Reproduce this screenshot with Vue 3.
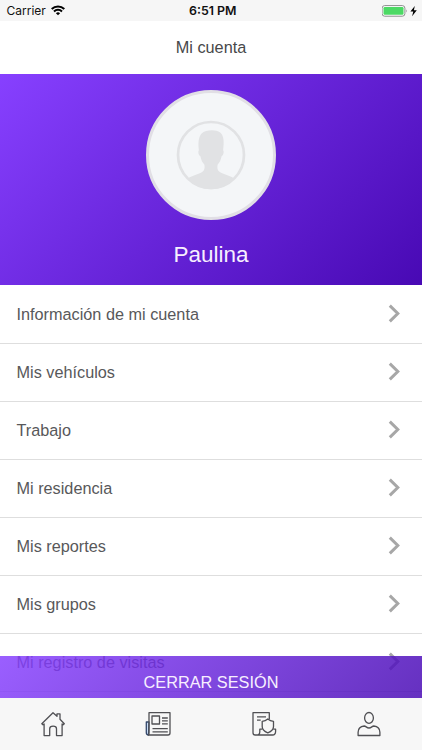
<script setup>
const items = [
  'Información de mi cuenta',
  'Mis vehículos',
  'Trabajo',
  'Mi residencia',
  'Mis reportes',
  'Mis grupos',
  'Mi registro de visitas',
]
</script>

<template>
  <div class="screen">
    <div class="status">
      <div class="carrier">
        <span>Carrier</span>
        <svg width="14" height="11" viewBox="0 0 14 11" fill="none" stroke="#000" stroke-width="2">
          <path d="M0.7 4 C4.2 0.5 9.8 0.5 13.3 4" />
          <path d="M3 6.5 C5.2 4.3 8.8 4.3 11 6.5" />
          <path d="M4.9 8.2 Q7 6.4 9.1 8.2 L7 10.3 Z" fill="#000" stroke="none" />
        </svg>
      </div>
      <div class="clock">6:51 PM</div>
      <div class="power">
        <svg width="36" height="12" viewBox="0 0 36 12">
          <rect x="0.1" y="0.6" width="22.8" height="10.6" rx="2.6" fill="#fff" stroke="#8c8c8c" />
          <rect x="1.5" y="2" width="20" height="7.8" rx="1.2" fill="#4cd964" />
          <path d="M24.2 4.2 Q25.7 5.9 24.2 7.6 Z" fill="#8c8c8c" />
          <path d="M32.8 0.9 L28.4 6.6 H31.3 L30.1 11.2 L34.8 5.2 H31.9 Z" fill="#000" />
        </svg>
      </div>
    </div>

    <header class="title">Mi cuenta</header>

    <section class="profile">
      <div class="avatar">
        <svg width="70" height="70" viewBox="0 0 70 70">
          <circle cx="35" cy="35" r="33" fill="none" stroke="#e1e2e4" stroke-width="2.7" />
          <path
            fill="#e1e2e4"
            d="M12.2 58.3 C16 55.6 22.5 54.6 26.5 51.8 C29 50 28.8 46.5 28.3 44.5 C26.2 42.3 25.2 39.7 24.4 36.2 C22.4 35.5 21.8 31 22.9 30.3 C22 23 22.3 17.5 25.6 13.5 C29.5 9.8 39.5 9.2 44.2 12.4 C48.4 15.5 48 23.5 47.1 30.3 C48.2 31 47.6 35.5 45.6 36.2 C44.8 39.7 43.8 42.3 41.7 44.5 C41.2 46.5 41 50 43.5 51.8 C47.5 54.6 54 55.6 57.8 58.3 C51.5 66.2 43.5 69.2 35 69.2 C26.5 69.2 18.5 66.2 12.2 58.3 Z"
          />
        </svg>
      </div>
      <div class="name">Paulina</div>
    </section>

    <ul class="menu">
      <li v-for="item in items" :key="item">
        <span>{{ item }}</span>
        <svg width="13" height="20" viewBox="0 0 13 20" fill="none" stroke="#a7a7a7" stroke-width="3">
          <path d="M1.8 1.6 L9.8 9.5 L1.8 17.4" />
        </svg>
      </li>
    </ul>

    <footer class="bottom">
      <button class="logout">CERRAR SESIÓN</button>
      <nav class="tabs">
        <a>
          <svg width="26" height="26" viewBox="0 0 26 26">
            <path d="M1.8 12.7 L13 1.7 L17 5.3 V2.8 H20 V8.3 L24.3 12.7 L23.1 13.8 L22.1 13 V24.6 H16.5 V17.8 Q16.5 15.2 13.1 15.2 Q9.7 15.2 9.7 17.8 V24.6 H4.1 V13 L3 13.8 Z" />
          </svg>
        </a>
        <a>
          <svg width="26" height="26" viewBox="0 0 26 26">
            <path d="M4 11 H1.3 V21.5 Q1.3 24 3.5 24 Z" fill="#c9dcf5" stroke="#34486b" />
            <path d="M4 1.7 H25 V22 Q25 24 23 24 H3.5 Q4 23.5 4 21.5 Z" />
            <path d="M7 5 H14.5 V13 H7 Z M17 7 H22.8 M17 9.9 H22.8 M17 12.8 H22.8 M7.5 17.7 H22.8 M7.5 20.8 H22.8" />
          </svg>
        </a>
        <a>
          <svg width="26" height="26" viewBox="0 0 26 26">
            <path d="M18.3 8.2 V1.7 H2 V21.8 Q2 24 4.2 24 H21.5 Q24.6 24 24.6 20.2 V18.2 H22.3 M11.2 18.2 H8.8 V20.7 Q8.8 24 5.5 24 M6 5.8 H15 M6 9.2 H9.7" />
            <path d="M16.8 8 Q19.2 10.1 22.5 10.3 V15.5 Q22.5 19.7 16.8 21.8 Q11.2 19.7 11.2 15.5 V10.3 Q14.4 10.1 16.8 8 Z" />
          </svg>
        </a>
        <a>
          <svg width="26" height="26" viewBox="0 0 26 26">
            <ellipse cx="13" cy="6.9" rx="4.4" ry="5.4" />
            <path d="M8.2 15 C10 15 10.5 17 13 17 C15.5 17 16 15 17.8 15 C21.7 15.5 23.9 17.8 23.9 21.2 V24.5 H2.1 V21.2 C2.1 17.8 4.3 15.5 8.2 15 Z" />
          </svg>
        </a>
      </nav>
    </footer>
  </div>
</template>

<style>
body {
  margin: 0;
  overflow: hidden;
}
</style>

<style scoped>
.screen {
  position: relative;
  display: flex;
  flex-direction: column;
  width: 422px;
  height: 750px;
  overflow: hidden;
  background: #fff;
  color: #58585a;
  font-family: "Liberation Sans", Arial, sans-serif;
}
.status {
  display: grid;
  grid-template-columns: 1fr auto 1fr;
  align-items: center;
  flex: none;
  height: 21px;
  padding: 0 4px 0 6.5px;
  background: #f6f6f6;
  color: #111;
  font: 12px/21px Inter, sans-serif;
}
.carrier {
  display: flex;
  align-items: center;
  gap: 5px;
}
.clock {
  padding-left: 1px;
  font-weight: 600;
  font-size: 12.4px;
}
.power {
  display: flex;
  justify-content: flex-end;
}
.title {
  flex: none;
  height: 53px;
  color: #48484a;
  font-size: 16.3px;
  line-height: 52px;
  text-align: center;
}
.profile {
  display: flex;
  flex: none;
  flex-direction: column;
  align-items: center;
  gap: 19px;
  box-sizing: border-box;
  height: 211px;
  padding-top: 16px;
  background: linear-gradient(135deg, #8740ff 0%, #4809b4 100%);
}
.avatar {
  display: flex;
  align-items: center;
  justify-content: center;
  box-sizing: border-box;
  width: 130px;
  height: 130px;
  border: 3px solid #e1dfe5;
  border-radius: 50%;
  background: #f4f6f8;
}
.name {
  color: #f7efff;
  font-size: 22.5px;
  line-height: 32px;
}
.menu {
  flex: none;
  margin: 0;
  padding: 1px 0 0;
  list-style: none;
}
.menu li {
  display: flex;
  align-items: center;
  justify-content: space-between;
  box-sizing: border-box;
  height: 58px;
  padding: 0 21.5px 0 16.5px;
  border-bottom: 1px solid #dedede;
  font-size: 16.25px;
}
.menu svg {
  margin-bottom: 1px;
}
.bottom {
  position: absolute;
  right: 0;
  bottom: 0;
  left: 0;
}
.logout {
  display: block;
  width: 100%;
  height: 42px;
  padding: 11px 0 0;
  border: 0;
  background: linear-gradient(135deg, rgba(135, 64, 255, 0.84), rgba(72, 9, 180, 0.84));
  color: #f7efff;
  font: 16.3px/31px "Liberation Sans", Arial, sans-serif;
  text-align: center;
}
.tabs {
  display: grid;
  grid-template-columns: repeat(4, 1fr);
  height: 52px;
  background: #f7f7f7;
}
.tabs a {
  display: flex;
  align-items: center;
  justify-content: center;
}
.tabs svg {
  fill: none;
  stroke: #505054;
  stroke-width: 1.3;
  stroke-linejoin: round;
}
</style>
